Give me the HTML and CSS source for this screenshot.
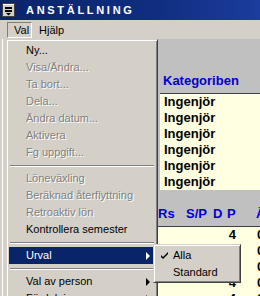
FILE: index.html
```html
<!DOCTYPE html>
<html>
<head>
<meta charset="utf-8">
<link rel="stylesheet" href="styles.css">
</head>
<body>
<div class="window">
  <div class="titlebar">
    <svg class="sysicon" width="13" height="14" viewBox="0 0 13 14">
      <rect x="0.5" y="0.5" width="12" height="13" fill="#d4d0c8" stroke="#404040"/>
      <rect x="1" y="1" width="11" height="1" fill="#ffffff"/>
      <rect x="3" y="4" width="7" height="2" fill="#000"/>
      <rect x="3" y="7" width="7" height="2" fill="#000"/>
      <polygon points="4,10 9,10 6.5,12.5" fill="#000"/>
    </svg>
    <span class="title">ANSTÄLLNING</span>
  </div>
  <div class="menubar">
    <span class="mb-item active">Val</span>
    <span class="mb-item">Hjälp</span>
  </div>
  <div class="client">
    <div class="leftstrip"></div>
    <div class="panel">
      <div class="hdr hdr1"><span class="hcell">Kategoriben</span></div>
      <div class="grid grid1">
        <div class="row">Ingenjör</div>
        <div class="row">Ingenjör</div>
        <div class="row">Ingenjör</div>
        <div class="row">Ingenjör</div>
        <div class="row">Ingenjör</div>
        <div class="row">Ingenjör</div>
      </div>
      <div class="hdr hdr2 cols">
        <span class="c1">Rs</span><span class="c2">S/P</span><span class="c3">D</span><span class="c4 hp">P</span><span class="c5">Ä</span>
      </div>
      <div class="grid grid2">
        <div class="row cols"><span class="c1"></span><span class="c2"></span><span class="c3"></span><span class="c4">4</span><span class="c5">0</span></div>
        <div class="row cols"><span class="c1"></span><span class="c2"></span><span class="c3"></span><span class="c4">4</span><span class="c5">0</span></div>
        <div class="row cols"><span class="c1"></span><span class="c2"></span><span class="c3"></span><span class="c4">4</span><span class="c5">0</span></div>
        <div class="row cols"><span class="c1"></span><span class="c2"></span><span class="c3"></span><span class="c4">4</span><span class="c5">0</span></div>
        <div class="row cols"><span class="c1"></span><span class="c2"></span><span class="c3"></span><span class="c4">4</span><span class="c5">0</span></div>
      </div>
    </div>
  </div>

  <div class="menu">
    <div class="mi">Ny...</div>
    <div class="mi dis">Visa/Ändra...</div>
    <div class="mi dis">Ta bort...</div>
    <div class="mi dis">Dela...</div>
    <div class="mi dis">Ändra datum...</div>
    <div class="mi dis">Aktivera</div>
    <div class="mi dis">Fg uppgift...</div>
    <div class="sep"></div>
    <div class="mi dis">Löneväxling</div>
    <div class="mi dis">Beräknad återflyttning</div>
    <div class="mi dis">Retroaktiv lön</div>
    <div class="mi">Kontrollera semester</div>
    <div class="sep"></div>
    <div class="mi sel sub">Urval</div>
    <div class="sep"></div>
    <div class="mi sub">Val av person</div>
    <div class="mi sub">Fördelning</div>
  </div>

  <div class="submenu">
    <div class="mi chk">
      <svg class="check" width="7" height="7" viewBox="0 0 7 7"><path d="M0 3 L2 5 L7 0 L7 2 L2 7 L0 5 Z" fill="#000"/></svg>
      Alla
    </div>
    <div class="mi">Standard</div>
  </div>
</div>
</body>
</html>
```

FILE: styles.css
```css
* { box-sizing: border-box; }
html, body { margin: 0; padding: 0; }
body {
  width: 260px;
  height: 296px;
  overflow: hidden;
  background: #d4d0c8;
  font-family: "Liberation Sans", Arial, sans-serif;
  font-size: 11px;
}
.window {
  position: relative;
  width: 260px;
  height: 296px;
  overflow: hidden;
  display: flex;
  flex-direction: column;
}
.titlebar {
  height: 20px;
  flex: none;
  background: linear-gradient(to right, #0a246a 0%, #102e80 60%, #1c3c9e 100%);
  display: flex;
  align-items: center;
  padding-left: 2px;
}
.sysicon { display: block; flex: none; }
.title {
  color: #fff;
  font-weight: bold;
  font-size: 11px;
  letter-spacing: 2.7px;
  margin-left: 11px;
  line-height: 14px;
}
.menubar {
  height: 19px;
  flex: none;
  background: #d4d0c8;
  display: flex;
  align-items: flex-start;
  padding: 2px 0 0 7px;
}
.mb-item {
  height: 16px;
  line-height: 14px;
  padding: 0 6px;
  border: 1px solid transparent;
  color: #000;
}
.mb-item.active {
  border-color: #808080 #ffffff #ffffff #808080;
  width: 25px;
  padding-left: 6px;
}
.client {
  flex: 1;
  display: flex;
  min-height: 0;
  overflow: hidden;
}
.leftstrip {
  width: 158px;
  flex: none;
  background: #d4d0c8;
  border-left: 2px solid #d4d0c8;
  box-shadow: inset 1px 0 0 #ffffff;
}
.panel {
  flex: 1;
  background: #c0c0c0;
  display: flex;
  flex-direction: column;
  font-size: 13px;
  font-weight: bold;
  overflow: hidden;
}
.hdr {
  flex: none;
  color: #0000d0;
  line-height: 16px;
  display: flex;
  align-items: flex-end;
}
.hdr1 { height: 54px; padding: 0 0 4px 5px; }
.hdr2 { height: 36px; padding-bottom: 4px; display: grid; align-items: end; }
.grid {
  flex: none;
  background: #ffffe1;
  border-top: 1px solid #404040;
  margin-left: 2px;
}
.grid1 { padding-left: 4px; }
.grid2 { flex: 1 0 auto; margin-left: 0; }
.row {
  height: 16px;
  line-height: 16px;
  color: #000;
}
.cols {
  display: grid;
  grid-template-columns: 28px 27px 14px 16px 1fr;
}
.c4 { text-align: right; padding-right: 7px; }
.hp { text-align: left; padding-right: 0; }
.c5 { padding-left: 14px; }
.hdr2 .c5 { padding-left: 13px; }

.menu {
  position: absolute;
  left: 6px;
  top: 39px;
  width: 152px;
  height: 280px;
  background: #d4d0c8;
  border: 1px solid;
  border-color: #d4d0c8 #404040 #404040 #d4d0c8;
  box-shadow: inset 1px 1px 0 #ffffff, inset -1px -1px 0 #808080;
  padding: 2px;
}
.mi {
  position: relative;
  height: 17px;
  line-height: 17px;
  padding-left: 17px;
  color: #000;
  white-space: nowrap;
}
.mi.dis {
  color: #808080;
  text-shadow: 1px 1px 0 #ffffff;
}
.mi.sel {
  background: #0a246a;
  color: #fff;
}
.mi.sub::after {
  content: "";
  position: absolute;
  right: 5px;
  top: 5px;
  border-left: 4px solid #000;
  border-top: 4px solid transparent;
  border-bottom: 4px solid transparent;
}
.mi.sel.sub::after { border-left-color: #fff; }
.sep {
  height: 9px;
  margin: 0 1px;
  position: relative;
}
.sep::before {
  content: "";
  position: absolute;
  left: 0; right: 0; top: 4px;
  height: 1px;
  background: #808080;
  box-shadow: 0 1px 0 #ffffff;
}
.submenu {
  position: absolute;
  left: 153px;
  top: 244px;
  width: 88px;
  height: 39px;
  background: #d4d0c8;
  border: 1px solid;
  border-color: #d4d0c8 #404040 #404040 #d4d0c8;
  box-shadow: inset 1px 1px 0 #ffffff, inset -1px -1px 0 #808080;
  padding: 2px;
  font-size: 11px;
}
.submenu .mi { padding-left: 17px; }
.check {
  position: absolute;
  left: 5px;
  top: 5px;
}
```
